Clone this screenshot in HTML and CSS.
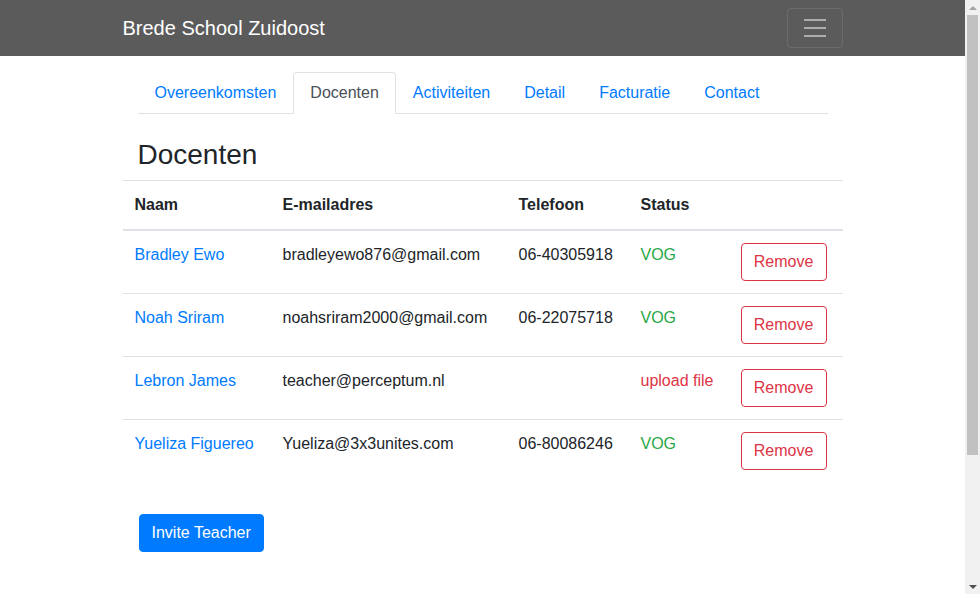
FILE: index.html
```html
<!DOCTYPE html>
<html lang="nl">
<head>
<meta charset="utf-8">
<title>Brede School Zuidoost</title>
<link rel="stylesheet" href="styles.css">
</head>
<body>
<nav class="navbar">
  <div class="navbar-inner">
    <a class="brand" href="#">Brede School Zuidoost</a>
    <button class="toggler" type="button" aria-label="Toggle navigation">
      <svg class="toggler-icon" width="30" height="30" viewBox="0 0 30 30"><path stroke="rgba(255,255,255,0.5)" stroke-width="2" stroke-miterlimit="10" d="M4 7h22M4 15h22M4 23h22"/></svg>
    </button>
  </div>
</nav>
<main class="container">
  <div class="section">
    <ul class="tabs">
      <li><a class="tab" href="#">Overeenkomsten</a></li>
      <li><a class="tab active" href="#">Docenten</a></li>
      <li><a class="tab" href="#">Activiteiten</a></li>
      <li><a class="tab" href="#">Detail</a></li>
      <li><a class="tab" href="#">Facturatie</a></li>
      <li><a class="tab" href="#">Contact</a></li>
    </ul>
    <h3 class="title">Docenten</h3>
  </div>
  <table class="table">
    <colgroup>
      <col class="c-name"><col class="c-mail"><col class="c-tel"><col class="c-status"><col class="c-act">
    </colgroup>
    <thead>
      <tr><th>Naam</th><th>E-mailadres</th><th>Telefoon</th><th>Status</th><th></th></tr>
    </thead>
    <tbody>
      <tr><td><a href="#">Bradley Ewo</a></td><td>bradleyewo876@gmail.com</td><td>06-40305918</td><td class="ok">VOG</td><td><button class="btn-remove">Remove</button></td></tr>
      <tr><td><a href="#">Noah Sriram</a></td><td>noahsriram2000@gmail.com</td><td>06-22075718</td><td class="ok">VOG</td><td><button class="btn-remove">Remove</button></td></tr>
      <tr><td><a href="#">Lebron James</a></td><td>teacher@perceptum.nl</td><td></td><td class="bad">upload file</td><td><button class="btn-remove">Remove</button></td></tr>
      <tr><td><a href="#">Yueliza Figuereo</a></td><td>Yueliza@3x3unites.com</td><td>06-80086246</td><td class="ok">VOG</td><td><button class="btn-remove">Remove</button></td></tr>
    </tbody>
  </table>
  <div class="section">
    <button class="btn-primary">Invite Teacher</button>
  </div>
</main>
<div class="scrollbar" aria-hidden="true">
  <div class="sb-arrow sb-up"></div>
  <div class="sb-track"><div class="sb-thumb"></div></div>
  <div class="sb-arrow sb-down"></div>
</div>
</body>
</html>
```
FILE: styles.css
```css
html, body {
  margin: 0;
  padding: 0;
}
body {
  font-family: "Liberation Sans", Arial, sans-serif;
  font-size: 16px;
  line-height: 1.5;
  color: #212529;
  background: #fff;
  margin-right: 15px;
}
a {
  color: #007bff;
  text-decoration: none;
}
.navbar {
  background: #5b5b5b;
  height: 56px;
  box-sizing: border-box;
  padding: 8px 0;
}
.navbar-inner {
  width: 720px;
  margin: 0 auto;
  display: flex;
  align-items: center;
  justify-content: space-between;
  height: 40px;
}
.brand {
  color: #fff;
  font-size: 20px;
  line-height: 30px;
  padding: 5px 0;
}
.toggler {
  width: 56px;
  height: 40px;
  box-sizing: border-box;
  padding: 4px 12px;
  background: transparent;
  border: 1px solid rgba(255,255,255,0.1);
  border-radius: 4px;
  display: flex;
  align-items: center;
  justify-content: center;
}
.toggler-icon {
  display: block;
}
.container {
  width: 720px;
  margin: 0 auto;
}
.section {
  padding: 0 15px;
}
.tabs {
  list-style: none;
  margin: 16px 0 0;
  padding: 0;
  display: flex;
  border-bottom: 1px solid #dee2e6;
}
.tabs li {
  margin-bottom: -1px;
}
.tab {
  display: block;
  padding: 8px 16px;
  border: 1px solid transparent;
  border-radius: 4px 4px 0 0;
}
.tab.active {
  color: #495057;
  background: #fff;
  border-color: #dee2e6 #dee2e6 #fff;
}
.title {
  font-size: 28px;
  font-weight: 500;
  line-height: 1.2;
  margin: 24px 0 8px;
}
.table {
  width: 720px;
  border-collapse: collapse;
  margin-bottom: 16px;
}
.c-name { width: 148px; }
.c-mail { width: 236px; }
.c-tel { width: 122px; }
.c-status { width: 100px; }
.c-act { width: 114px; }
.table th, .table td {
  padding: 12px;
  text-align: left;
  vertical-align: top;
  border-top: 1px solid #dee2e6;
}
.table th {
  font-weight: bold;
  border-bottom: 2px solid #dee2e6;
  vertical-align: bottom;
}
.ok { color: #28a745; }
.bad { color: #dc3545; }
.btn-remove {
  font-family: inherit;
  font-size: 16px;
  line-height: 24px;
  padding: 6px 12px;
  min-width: 86px;
  color: #dc3545;
  background: transparent;
  border: 1px solid #dc3545;
  border-radius: 4px;
}
.btn-primary {
  font-family: inherit;
  font-size: 16px;
  line-height: 24px;
  padding: 6px 12px;
  color: #fff;
  background: #007bff;
  border: 1px solid #007bff;
  border-radius: 4px;
  margin: 16px 0 0 1px;
}
.scrollbar {
  position: fixed;
  top: 0;
  right: 0;
  width: 15px;
  height: 100%;
  background: #f1f1f1;
  display: flex;
  flex-direction: column;
}
.sb-arrow {
  height: 15px;
  display: flex;
  align-items: center;
  justify-content: center;
}
.sb-arrow::before {
  content: "";
  width: 0;
  height: 0;
  border-left: 4px solid transparent;
  border-right: 4px solid transparent;
}
.sb-up::before {
  border-bottom: 4px solid #a3a3a3;
}
.sb-down::before {
  border-top: 4px solid #505050;
}
.sb-track {
  flex: 1;
  padding: 0 2px;
}
.sb-thumb {
  height: 440px;
  background: #c1c1c1;
}
```
